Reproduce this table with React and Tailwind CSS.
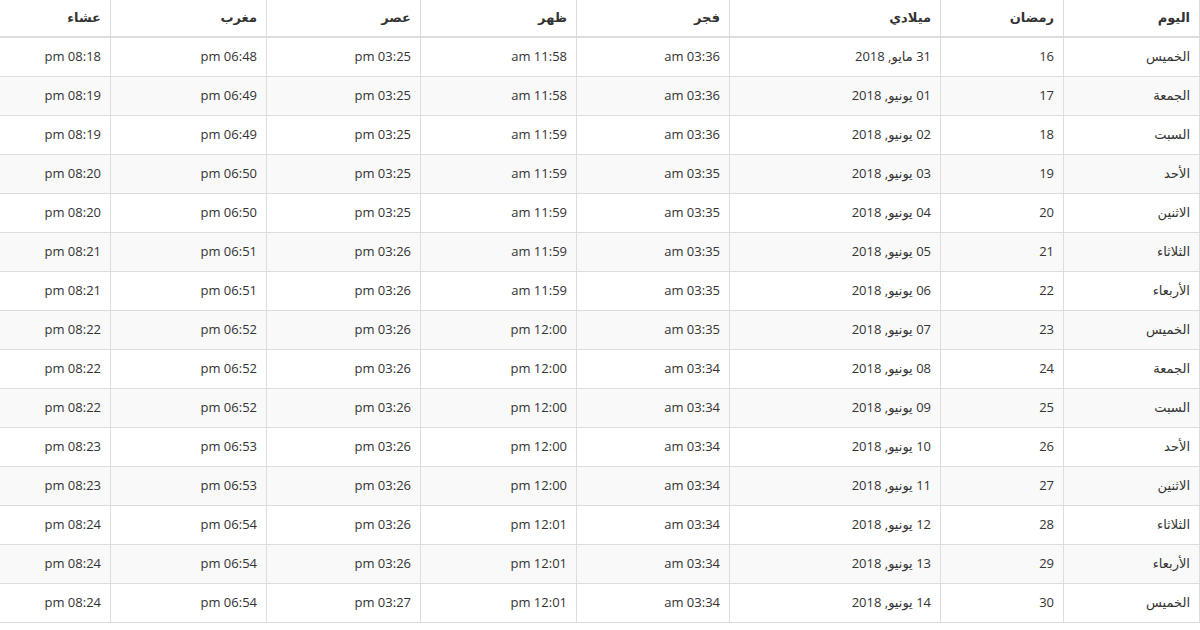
import React from 'react';

const columns = [
  { title: 'اليوم', w: 'w-[136px]' },
  { title: 'رمضان', w: 'w-[123px]' },
  { title: 'ميلادي', w: 'w-[211px]' },
  { title: 'فجر', w: 'w-[153px]' },
  { title: 'ظهر', w: 'w-[156px]' },
  { title: 'عصر', w: 'w-[154px]' },
  { title: 'مغرب', w: 'w-[156px]' },
  { title: 'عشاء', w: 'w-[112px]' },
];

const rows = [
  ['الخميس', '16', '31 مايو, 2018', '03:36 am', '11:58 am', '03:25 pm', '06:48 pm', '08:18 pm'],
  ['الجمعة', '17', '01 يونيو, 2018', '03:36 am', '11:58 am', '03:25 pm', '06:49 pm', '08:19 pm'],
  ['السبت', '18', '02 يونيو, 2018', '03:36 am', '11:59 am', '03:25 pm', '06:49 pm', '08:19 pm'],
  ['الأحد', '19', '03 يونيو, 2018', '03:35 am', '11:59 am', '03:25 pm', '06:50 pm', '08:20 pm'],
  ['الاثنين', '20', '04 يونيو, 2018', '03:35 am', '11:59 am', '03:25 pm', '06:50 pm', '08:20 pm'],
  ['الثلاثاء', '21', '05 يونيو, 2018', '03:35 am', '11:59 am', '03:26 pm', '06:51 pm', '08:21 pm'],
  ['الأربعاء', '22', '06 يونيو, 2018', '03:35 am', '11:59 am', '03:26 pm', '06:51 pm', '08:21 pm'],
  ['الخميس', '23', '07 يونيو, 2018', '03:35 am', '12:00 pm', '03:26 pm', '06:52 pm', '08:22 pm'],
  ['الجمعة', '24', '08 يونيو, 2018', '03:34 am', '12:00 pm', '03:26 pm', '06:52 pm', '08:22 pm'],
  ['السبت', '25', '09 يونيو, 2018', '03:34 am', '12:00 pm', '03:26 pm', '06:52 pm', '08:22 pm'],
  ['الأحد', '26', '10 يونيو, 2018', '03:34 am', '12:00 pm', '03:26 pm', '06:53 pm', '08:23 pm'],
  ['الاثنين', '27', '11 يونيو, 2018', '03:34 am', '12:00 pm', '03:26 pm', '06:53 pm', '08:23 pm'],
  ['الثلاثاء', '28', '12 يونيو, 2018', '03:34 am', '12:01 pm', '03:26 pm', '06:54 pm', '08:24 pm'],
  ['الأربعاء', '29', '13 يونيو, 2018', '03:34 am', '12:01 pm', '03:26 pm', '06:54 pm', '08:24 pm'],
  ['الخميس', '30', '14 يونيو, 2018', '03:34 am', '12:01 pm', '03:27 pm', '06:54 pm', '08:24 pm'],
];

export default function App() {
  return (
    <div
      dir="rtl"
      className="w-[1200px] h-[630px] overflow-hidden bg-white text-[#333] font-['Open_Sans','DejaVu_Sans',sans-serif]"
    >
      <table className="w-[1200px] table-fixed border-collapse text-[13px]">
        <thead>
          <tr className="h-[37px]">
            {columns.map((c) => (
              <th
                key={c.title}
                className={`${c.w} border-x border-b-2 border-[#ddd] px-[9px] text-right align-middle text-[13px] font-bold text-[#333]`}
              >
                {c.title}
              </th>
            ))}
          </tr>
        </thead>
        <tbody>
          {rows.map((r, i) => (
            <tr key={i} className={`h-[39px] ${i % 2 === 1 ? 'bg-[#f9f9f9]' : 'bg-white'}`}>
              {r.map((cell, j) => (
                <td
                  key={j}
                  className="border border-[#ddd] px-[9px] text-right align-middle whitespace-nowrap"
                >
                  {cell}
                </td>
              ))}
            </tr>
          ))}
        </tbody>
      </table>
    </div>
  );
}
